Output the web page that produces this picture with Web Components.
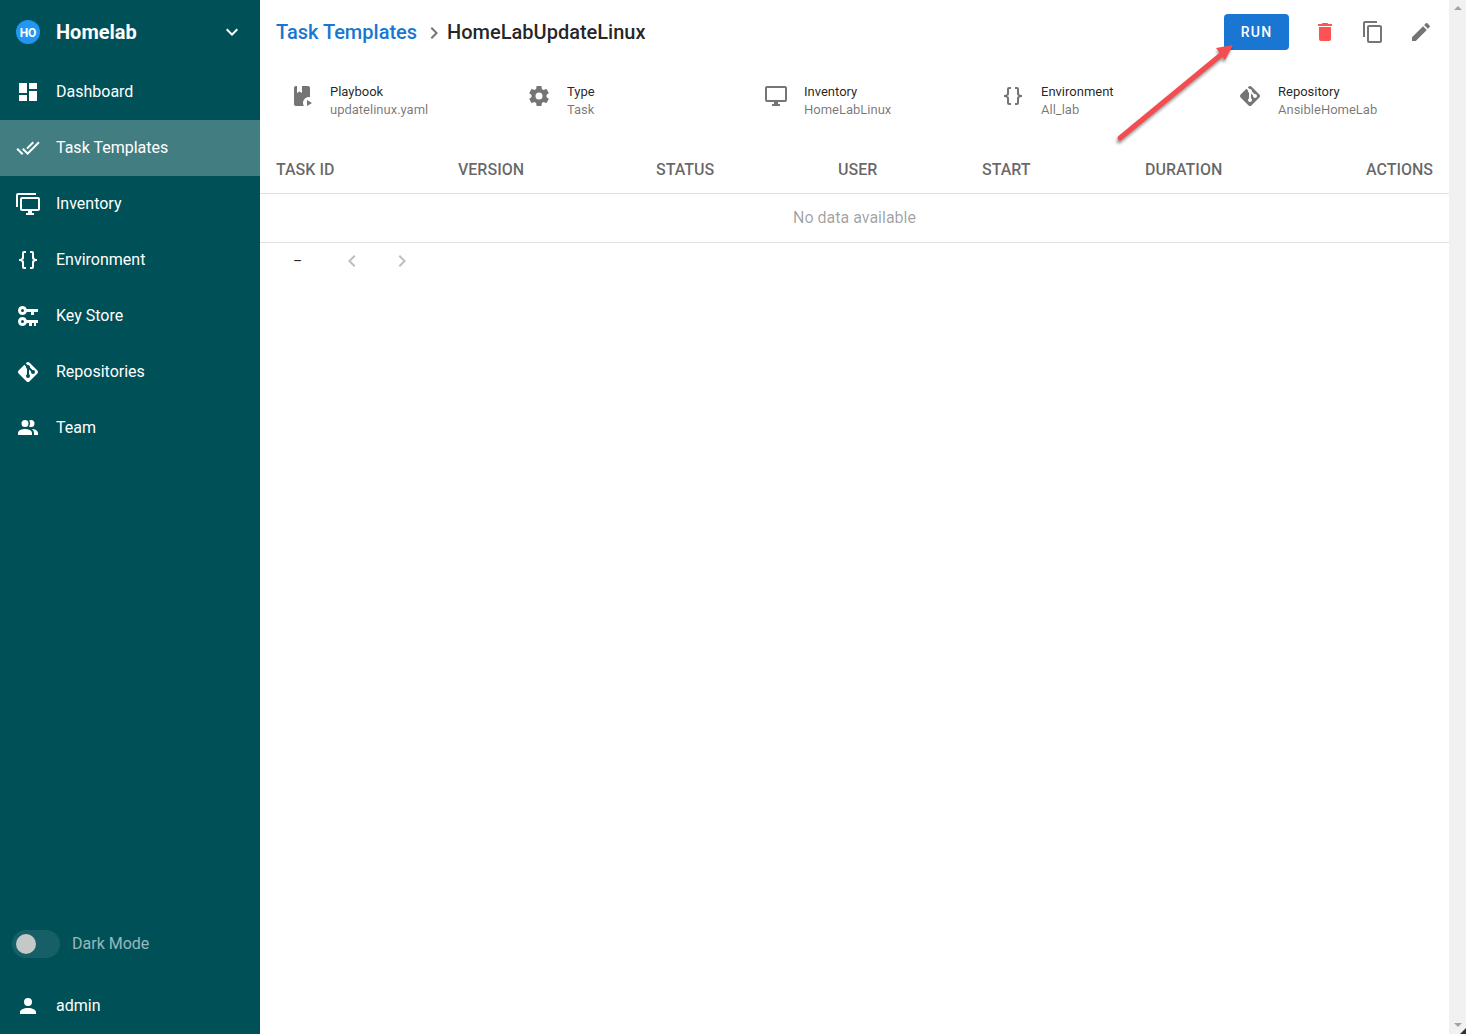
<!DOCTYPE html>
<html lang="en">
<head>
<meta charset="utf-8">
<title>HomeLabUpdateLinux</title>
<style>
html,body{margin:0;height:100%;overflow:hidden;font-family:Roboto,"Liberation Sans",sans-serif;}
body{display:flex;height:1034px;}
</style>
</head>
<body>
<sem-sidebar>
  <sem-project slot="top">Homelab</sem-project>
  <sem-nav-item slot="top" icon="dashboard">Dashboard</sem-nav-item>
  <sem-nav-item slot="top" icon="checkall" active>Task Templates</sem-nav-item>
  <sem-nav-item slot="top" icon="monitors">Inventory</sem-nav-item>
  <sem-nav-item slot="top" icon="braces">Environment</sem-nav-item>
  <sem-nav-item slot="top" icon="keys">Key Store</sem-nav-item>
  <sem-nav-item slot="top" icon="git">Repositories</sem-nav-item>
  <sem-nav-item slot="top" icon="team">Team</sem-nav-item>
  <sem-switch slot="bottom">Dark Mode</sem-switch>
  <sem-nav-item slot="bottom" icon="account">admin</sem-nav-item>
</sem-sidebar>
<sem-main>
  <sem-toolbar>
    <span slot="link">Task Templates</span>
    <span slot="title">HomeLabUpdateLinux</span>
  </sem-toolbar>
  <sem-details>
    <sem-detail icon="bookplay" label="Playbook">updatelinux.yaml</sem-detail>
    <sem-detail icon="cog" label="Type">Task</sem-detail>
    <sem-detail icon="monitor" label="Inventory">HomeLabLinux</sem-detail>
    <sem-detail icon="braces" label="Environment">All_lab</sem-detail>
    <sem-detail icon="git" label="Repository">AnsibleHomeLab</sem-detail>
  </sem-details>
  <sem-table></sem-table>
  <sem-arrow></sem-arrow>
</sem-main>
<sem-scrollbar></sem-scrollbar>

<script>
const ICONS = {
  dashboard: 'M13,3V9H21V3M13,21H21V11H13M3,21H11V15H3M3,13H11V3H3V13Z',
  checkall: 'M0.41,13.41L6,19L7.41,17.58L1.83,12M22.24,5.58L11.66,16.17L7.5,12L6.07,13.41L11.66,19L23.66,7M18,7L16.59,5.58L10.24,11.93L11.66,13.34L18,7Z',
  monitors: 'M22,17V7H6V17H22M22,5A2,2 0 0,1 24,7V17C24,18.11 23.1,19 22,19H16V21H18V23H10V21H12V19H6C4.89,19 4,18.11 4,17V7A2,2 0 0,1 6,5H22M2,3V15H0V3A2,2 0 0,1 2,1H20V3H2Z',
  braces: 'M8,3A2,2 0 0,0 6,5V9A2,2 0 0,1 4,11H3V13H4A2,2 0 0,1 6,15V19A2,2 0 0,0 8,21H10V19H8V14A2,2 0 0,0 6,12A2,2 0 0,0 8,10V5H10V3M16,3A2,2 0 0,1 18,5V9A2,2 0 0,0 20,11H21V13H20A2,2 0 0,0 18,15V19A2,2 0 0,1 16,21H14V19H16V14A2,2 0 0,1 18,12A2,2 0 0,1 16,10V5H14V3H16Z',
  keys: 'M6.5,2C8.46,2 10.13,3.25 10.74,5H22V8H18V11H15V8H10.74C10.13,9.75 8.46,11 6.5,11C4,11 2,9 2,6.5C2,4 4,2 6.5,2M6.5,5A1.5,1.5 0 0,0 5,6.5A1.5,1.5 0 0,0 6.5,8A1.5,1.5 0 0,0 8,6.5A1.5,1.5 0 0,0 6.5,5M6.5,13C8.46,13 10.13,14.25 10.74,16H22V19H20V22H18V19H16V22H13V19H10.74C10.13,20.75 8.46,22 6.5,22C4,22 2,20 2,17.5C2,15 4,13 6.5,13M6.5,16A1.5,1.5 0 0,0 5,17.5A1.5,1.5 0 0,0 6.5,19A1.5,1.5 0 0,0 8,17.5A1.5,1.5 0 0,0 6.5,16Z',
  git: 'M2.6,10.59L8.38,4.8L10.07,6.5C9.83,7.35 10.22,8.28 11,8.73V14.27C10.4,14.61 10,15.26 10,16A2,2 0 0,0 12,18A2,2 0 0,0 14,16C14,15.26 13.6,14.61 13,14.27V9.41L15.07,11.5C15,11.65 15,11.82 15,12A2,2 0 0,0 17,14A2,2 0 0,0 19,12A2,2 0 0,0 17,10C16.82,10 16.65,10 16.5,10.07L13.93,7.5C14.19,6.57 13.71,5.55 12.78,5.16C12.35,5 11.9,4.96 11.5,5.07L9.8,3.38L10.59,2.6C11.37,1.81 12.63,1.81 13.41,2.6L21.4,10.59C22.19,11.37 22.19,12.63 21.4,13.41L13.41,21.4C12.63,22.19 11.37,22.19 10.59,21.4L2.6,13.41C1.81,12.63 1.81,11.37 2.6,10.59Z',
  team: 'M16 17V19H2V17S2 13 9 13 16 17 16 17M12.5 7.5A3.5 3.5 0 1 0 9 11A3.5 3.5 0 0 0 12.5 7.5M15.94 13A5.32 5.32 0 0 1 18 17V19H22V17S22 13.37 15.94 13M15 4A3.39 3.39 0 0 0 13.07 4.59A5 5 0 0 1 13.07 10.41A3.39 3.39 0 0 0 15 11A3.5 3.5 0 0 0 15 4Z',
  account: 'M12,4A4,4 0 0,1 16,8A4,4 0 0,1 12,12A4,4 0 0,1 8,8A4,4 0 0,1 12,4M12,14C16.42,14 20,15.79 20,18V20H4V18C4,15.79 7.58,14 12,14Z',
  chevrondown: 'M7.41,8.58L12,13.17L16.59,8.58L18,10L12,16L6,10L7.41,8.58Z',
  chevronright: 'M8.59,16.58L13.17,12L8.59,7.41L10,6L16,12L10,18L8.59,16.58Z',
  chevronleft: 'M15.41,16.58L10.83,12L15.41,7.41L14,6L8,12L14,18L15.41,16.58Z',
  trash: 'M19,4H15.5L14.5,3H9.5L8.5,4H5V6H19M6,19A2,2 0 0,0 8,21H16A2,2 0 0,0 18,19V7H6V19Z',
  copy: 'M19,21H8V7H19M19,5H8A2,2 0 0,0 6,7V21A2,2 0 0,0 8,23H19A2,2 0 0,0 21,21V7A2,2 0 0,0 19,5M16,1H4A2,2 0 0,0 2,3V17H4V3H16V1Z',
  pencil: 'M20.71,7.04C21.1,6.65 21.1,6 20.71,5.63L18.37,3.29C18,2.9 17.35,2.9 16.96,3.29L15.12,5.12L18.87,8.87M3,17.25V21H6.75L17.81,9.93L14.06,6.18L3,17.25Z',
  cog: 'M12,15.5A3.5,3.5 0 0,1 8.5,12A3.5,3.5 0 0,1 12,8.5A3.5,3.5 0 0,1 15.5,12A3.5,3.5 0 0,1 12,15.5M19.43,12.97C19.47,12.65 19.5,12.33 19.5,12C19.5,11.67 19.47,11.34 19.43,11L21.54,9.37C21.73,9.22 21.78,8.95 21.66,8.73L19.66,5.27C19.54,5.05 19.27,4.96 19.05,5.05L16.56,6.05C16.04,5.66 15.5,5.32 14.87,5.07L14.5,2.42C14.46,2.18 14.25,2 14,2H10C9.75,2 9.54,2.18 9.5,2.42L9.13,5.07C8.5,5.32 7.96,5.66 7.44,6.05L4.95,5.05C4.73,4.96 4.46,5.05 4.34,5.27L2.34,8.73C2.21,8.95 2.27,9.22 2.46,9.37L4.57,11C4.53,11.34 4.5,11.67 4.5,12C4.5,12.33 4.53,12.65 4.57,12.97L2.46,14.63C2.27,14.78 2.21,15.05 2.34,15.27L4.34,18.73C4.46,18.95 4.73,19.03 4.95,18.95L7.44,17.94C7.96,18.34 8.5,18.68 9.13,18.93L9.5,21.58C9.54,21.82 9.75,22 10,22H14C14.25,22 14.46,21.82 14.5,21.58L14.87,18.93C15.5,18.67 16.04,18.34 16.56,17.94L19.05,18.95C19.27,19.03 19.54,18.95 19.66,18.73L21.66,15.27C21.78,15.05 21.73,14.78 21.54,14.63L19.43,12.97Z',
  monitor: 'M21,16H3V4H21M21,2H3C1.89,2 1,2.89 1,4V16A2,2 0 0,0 3,18H10V20H8V22H16V20H14V18H21A2,2 0 0,0 23,16V4C23,2.89 22.1,2 21,2Z',
  bookplay: 'M13 19C13 20.1 13.3 21.12 13.81 22H6C4.89 22 4 21.11 4 20V4C4 2.9 4.89 2 6 2H7V9L9.5 7.5L12 9V2H18C19.1 2 20 2.89 20 4V13.09C19.67 13.04 19.34 13 19 13C15.69 13 13 15.69 13 19M17 16V22L22 19L17 16Z'
};

class SemIcon extends HTMLElement {
  connectedCallback(){
    if(this.shadowRoot) return;
    this.attachShadow({mode:'open'});
    const d = ICONS[this.getAttribute('name')];
    this.shadowRoot.innerHTML = `<style>
      :host{display:block;width:24px;height:24px;flex:none;}
      svg{display:block;width:100%;height:100%;fill:currentColor;}
    </style><svg viewBox="0 0 24 24"><path d="${d}"/></svg>`;
  }
}

class SemSidebar extends HTMLElement {
  constructor(){
    super();
    this.attachShadow({mode:'open'});
    this.shadowRoot.innerHTML = `<style>
      :host{display:flex;flex-direction:column;justify-content:space-between;width:260px;height:100%;flex:none;background:#005057;color:#fff;}
      .part{display:flex;flex-direction:column;}
    </style>
    <div class="part"><slot name="top"></slot></div>
    <div class="part"><slot name="bottom"></slot></div>`;
  }
}

class SemProject extends HTMLElement {
  constructor(){
    super();
    this.attachShadow({mode:'open'});
    this.shadowRoot.innerHTML = `<style>
      :host{display:flex;align-items:center;height:64px;padding:0 16px;box-sizing:border-box;}
      .logo{width:24px;height:24px;border-radius:50%;background:#2196f3;color:#fff;font-size:12px;font-weight:700;display:flex;align-items:center;justify-content:center;padding-top:1px;box-sizing:border-box;margin-right:16px;}
      .name{flex:1;font-size:20px;font-weight:700;}
    </style>
    <span class="logo">HO</span><span class="name"><slot></slot></span><sem-icon name="chevrondown"></sem-icon>`;
  }
}

class SemNavItem extends HTMLElement {
  constructor(){
    super();
    this.attachShadow({mode:'open'});
    this.shadowRoot.innerHTML = `<style>
      :host{display:flex;align-items:center;height:56px;padding:0 16px;box-sizing:border-box;font-size:16px;font-weight:400;color:#fff;}
      :host([active]){background:rgba(255,255,255,.26);}
      sem-icon{margin-right:16px;}
      span{margin-bottom:2px;}
    </style>
    <sem-icon name="${this.getAttribute('icon')}"></sem-icon><span><slot></slot></span>`;
  }
}

class SemSwitch extends HTMLElement {
  constructor(){
    super();
    this.attachShadow({mode:'open'});
    this.shadowRoot.innerHTML = `<style>
      :host{display:flex;align-items:center;height:28px;padding:0 12px;margin-bottom:20px;font-size:16px;color:rgba(255,255,255,.6);}
      .track{position:relative;width:48px;height:28px;border-radius:14px;background:rgba(255,255,255,.09);margin-right:12px;}
      .thumb{position:absolute;left:4px;top:4px;width:20px;height:20px;border-radius:50%;background:#c4c8c8;}
      .label{margin-bottom:2px;}
    </style>
    <span class="track"><span class="thumb"></span></span><span class="label"><slot></slot></span>`;
  }
}

class SemMain extends HTMLElement {
  constructor(){
    super();
    this.attachShadow({mode:'open'});
    this.shadowRoot.innerHTML = `<style>
      :host{display:block;position:relative;flex:1;min-width:0;background:#fff;}
    </style><slot></slot>`;
  }
}

class SemToolbar extends HTMLElement {
  constructor(){
    super();
    this.attachShadow({mode:'open'});
    this.shadowRoot.innerHTML = `<style>
      :host{display:flex;align-items:center;height:64px;padding:0 4px 0 16px;box-sizing:border-box;font-size:20px;font-weight:500;color:rgba(0,0,0,.87);}
      .link{color:#1976d2;}
      .sep{color:#757575;margin:2px 1px 0 5px;}
      .grow{flex:1;}
      .run{display:flex;align-items:center;justify-content:center;width:65px;height:36px;border-radius:4px;background:#1976d2;color:#fff;font-size:14px;font-weight:500;letter-spacing:.0892857em;margin-right:12px;}
      .btn{display:flex;align-items:center;justify-content:center;width:48px;height:48px;color:#757575;}
      .red{color:#ff5252;}
    </style>
    <span class="link"><slot name="link"></slot></span>
    <sem-icon class="sep" name="chevronright"></sem-icon>
    <span><slot name="title"></slot></span>
    <span class="grow"></span>
    <span class="run">RUN</span>
    <span class="btn red"><sem-icon name="trash"></sem-icon></span>
    <span class="btn"><sem-icon name="copy"></sem-icon></span>
    <span class="btn"><sem-icon name="pencil"></sem-icon></span>`;
  }
}

class SemDetails extends HTMLElement {
  constructor(){
    super();
    this.attachShadow({mode:'open'});
    this.shadowRoot.innerHTML = `<style>
      :host{display:grid;grid-template-columns:repeat(5,237px);height:81px;padding:19px 0 0 30px;box-sizing:border-box;align-items:start;}
    </style><slot></slot>`;
  }
}

class SemDetail extends HTMLElement {
  constructor(){
    super();
    this.attachShadow({mode:'open'});
    this.shadowRoot.innerHTML = `<style>
      :host{display:flex;align-items:flex-start;font-size:13px;line-height:18px;}
      sem-icon{color:#757575;margin:1px 16px 0 0;}
      .label{color:rgba(0,0,0,.87);}
      .value{color:rgba(0,0,0,.54);}
    </style>
    <sem-icon name="${this.getAttribute('icon')}"></sem-icon>
    <div><div class="label">${this.getAttribute('label')}</div><div class="value"><slot></slot></div></div>`;
  }
}

class SemTable extends HTMLElement {
  constructor(){
    super();
    this.attachShadow({mode:'open'});
    this.shadowRoot.innerHTML = `<style>
      :host{display:block;font-size:16px;}
      .head{display:grid;grid-template-columns:182px 198px 182px 144px 163px 1fr auto;height:49px;box-sizing:border-box;border-bottom:1px solid #e0e0e0;align-items:center;font-weight:500;color:rgba(0,0,0,.6);}
      .head span{padding:0 16px;}
      .empty{height:49px;box-sizing:border-box;border-bottom:1px solid #e0e0e0;display:flex;align-items:center;justify-content:center;color:rgba(0,0,0,.38);padding-bottom:2px;}
      .foot{display:flex;align-items:center;height:36px;font-size:14px;color:rgba(0,0,0,.87);padding-left:33px;}
      .range{width:8px;text-align:center;}
      .foot sem-icon{color:rgba(0,0,0,.26);}
      .prev{margin-left:39px;}
      .next{margin-left:26px;}
    </style>
    <div class="head"><span>TASK ID</span><span>VERSION</span><span>STATUS</span><span>USER</span><span>START</span><span>DURATION</span><span>ACTIONS</span></div>
    <div class="empty">No data available</div>
    <div class="foot"><span class="range">–</span><sem-icon class="prev" name="chevronleft"></sem-icon><sem-icon class="next" name="chevronright"></sem-icon></div>`;
  }
}

// red arrow drawn over the screenshot, points at the RUN button
class SemArrow extends HTMLElement {
  constructor(){
    super();
    this.attachShadow({mode:'open'});
    this.shadowRoot.innerHTML = `<style>
      :host{position:absolute;left:840px;top:30px;width:150px;height:125px;pointer-events:none;}
      svg{display:block;overflow:visible;}
    </style>
    <svg width="150" height="125" viewBox="0 0 150 125">
      <g fill="#000" opacity=".4" transform="translate(-1,3)" style="filter:blur(1.5px)">
        <path d="M20 108L122 24" stroke="#000" stroke-width="5" stroke-linecap="round"/>
        <path d="M133 15L125 30L117 18Z"/>
      </g>
      <path d="M20 108L122 24" stroke="#f44c4f" stroke-width="5" stroke-linecap="round"/>
      <path d="M133 15L125 30L116 18Z" fill="#f44c4f"/>
    </svg>`;
  }
}

class SemScrollbar extends HTMLElement {
  constructor(){
    super();
    this.attachShadow({mode:'open'});
    this.shadowRoot.innerHTML = `<style>
      :host{position:relative;display:flex;flex-direction:column;justify-content:space-between;align-items:center;width:17px;height:100%;flex:none;background:#f1f1f1;padding:6px 0 7px;box-sizing:border-box;}
      i{display:block;width:0;height:0;border-left:4px solid transparent;border-right:4px solid transparent;}
      .up{border-bottom:4px solid #a3a3a3;}
      .down{border-top:4px solid #a3a3a3;}
      :host::after{content:"";position:absolute;right:0;bottom:0;width:0;height:0;border-left:6px solid transparent;border-bottom:6px solid #333;}
    </style><i class="up"></i><i class="down"></i>`;
  }
}

customElements.define('sem-icon', SemIcon);
customElements.define('sem-sidebar', SemSidebar);
customElements.define('sem-project', SemProject);
customElements.define('sem-nav-item', SemNavItem);
customElements.define('sem-switch', SemSwitch);
customElements.define('sem-main', SemMain);
customElements.define('sem-toolbar', SemToolbar);
customElements.define('sem-details', SemDetails);
customElements.define('sem-detail', SemDetail);
customElements.define('sem-table', SemTable);
customElements.define('sem-arrow', SemArrow);
customElements.define('sem-scrollbar', SemScrollbar);
</script>
</body>
</html>
